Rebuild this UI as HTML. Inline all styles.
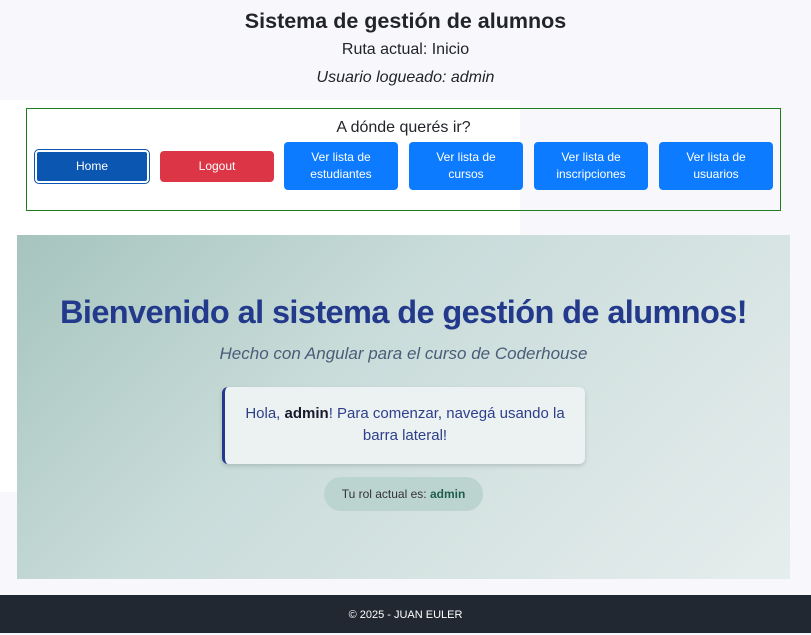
<!DOCTYPE html>
<html><head><meta charset="utf-8"><style>
*{box-sizing:border-box;margin:0;padding:0}
body{width:811px;height:633px;background:#f8f8fc;font-family:"Liberation Sans",sans-serif;position:relative;overflow:hidden;color:#212529}
.white{position:absolute;left:0;top:100px;width:520px;height:392px;background:#fff}
.h1{position:absolute;top:9px;left:0;width:811px;text-align:center;font-size:21.5px;font-weight:bold}
.r{position:absolute;top:41px;width:811px;text-align:center;font-size:16px}
.u{position:absolute;top:69px;width:811px;text-align:center;font-size:16px;font-style:italic}
.nav{position:absolute;left:26px;top:108px;width:755px;height:103px;border:1px solid #1e7e1e}
.nav .t{position:absolute;top:10px;width:100%;text-align:center;font-size:16px}
.b{position:absolute;top:33px;height:48px;width:114px;border-radius:4px;background:#0d7bff;color:#fff;font-size:12px;text-align:center;display:flex;align-items:center;justify-content:center;line-height:17px}
.hero{position:absolute;left:17px;top:235px;width:773px;height:344px;background:linear-gradient(135deg,#a6c4bd 0%,#c9dcda 40%,#e6eded 100%)}
.hero h2{position:absolute;top:59px;width:100%;text-align:center;font-size:32.5px;color:#233a8c;font-weight:bold;letter-spacing:-0.6px}
.hero .s{position:absolute;top:109px;width:100%;text-align:center;font-size:17px;font-style:italic;color:#4a5d78}
.card{position:absolute;left:205px;top:152px;width:363px;height:77px;background:#ecf1f2;border-left:3px solid #233a8c;border-radius:6px;box-shadow:0 2px 5px rgba(0,0,0,.15);text-align:center;color:#2d3f8a;font-size:15px;line-height:22px;padding:16px 20px}
.pill{position:absolute;left:307px;top:242px;width:159px;height:34px;border-radius:17px;background:#bcd4d0;font-size:12px;color:#333;text-align:center;line-height:34px}
.f{position:absolute;left:0;top:595px;width:811px;height:38px;background:#222831;color:#fff;font-size:11px;text-align:center;line-height:40px}
</style></head><body>
<div class="white"></div>
<div class="h1">Sistema de gestión de alumnos</div>
<div class="r">Ruta actual: Inicio</div>
<div class="u">Usuario logueado: admin</div>
<div class="nav"><div class="t">A dónde querés ir?</div>
<div class="b" style="left:8px;top:41px;height:33px;background:#0a56b0;border:2px solid #fff;box-shadow:0 0 0 1px #0a56b0">Home</div>
<div class="b" style="left:133px;top:42px;height:31px;background:#dc3545">Logout</div>
<div class="b" style="left:257px">Ver lista de<br>estudiantes</div>
<div class="b" style="left:382px">Ver lista de<br>cursos</div>
<div class="b" style="left:507px">Ver lista de<br>inscripciones</div>
<div class="b" style="left:632px">Ver lista de<br>usuarios</div>
</div>
<div class="hero">
<h2>Bienvenido al sistema de gestión de alumnos!</h2>
<div class="s">Hecho con Angular para el curso de Coderhouse</div>
<div class="card">Hola, <b style="color:#1a1a2e">admin</b>! Para comenzar, navegá usando la barra lateral!</div>
<div class="pill">Tu rol actual es: <b style="color:#1f5e4a">admin</b></div>
</div>
<div class="f">© 2025 - JUAN EULER</div>
</body></html>
